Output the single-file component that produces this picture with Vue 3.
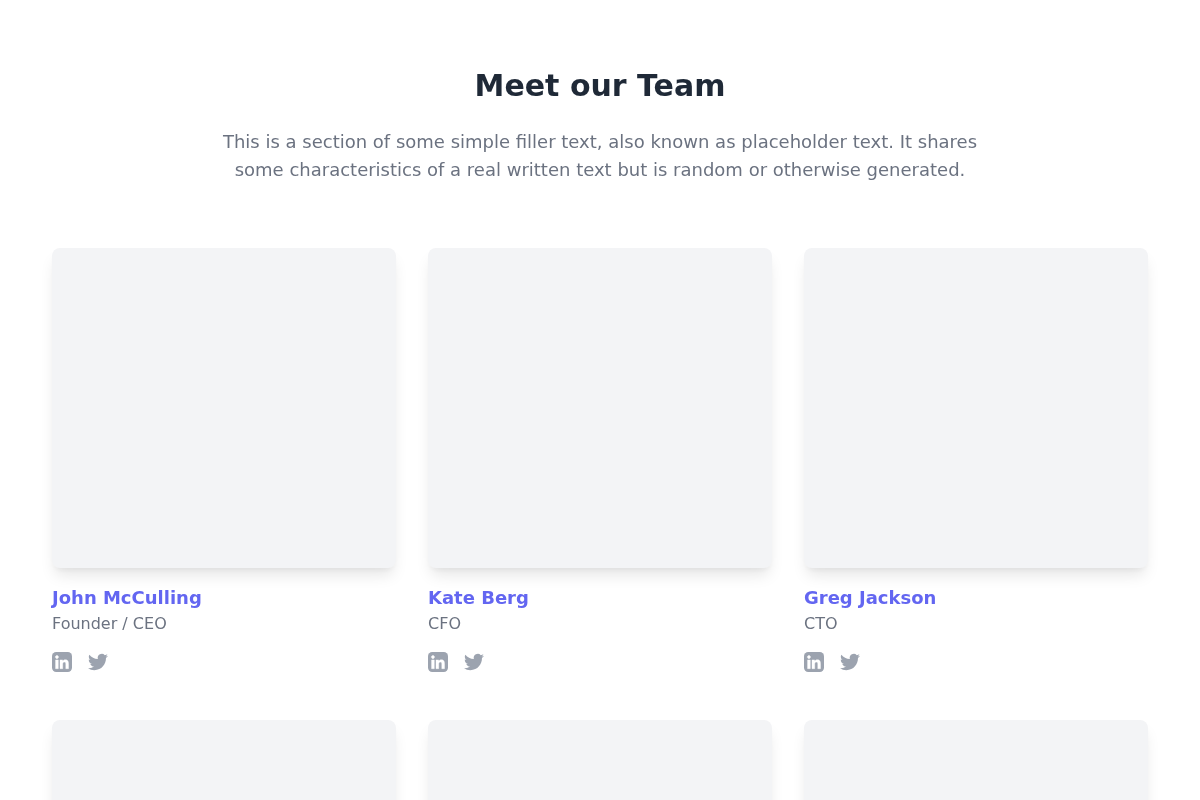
<template>
  <section class="team">
    <header class="intro">
      <h1>Meet our Team</h1>
      <p>This is a section of some simple filler text, also known as placeholder text. It shares some characteristics of a real written text but is random or otherwise generated.</p>
    </header>
    <div class="grid">
      <article v-for="(member, i) in members" :key="i" class="member">
        <div class="photo"></div>
        <template v-if="member.name">
          <h2>{{ member.name }}</h2>
          <div class="role">{{ member.role }}</div>
          <div class="links">
            <a href="#" aria-label="LinkedIn">
              <svg viewBox="0 0 24 24" width="20" height="20">
                <rect width="24" height="24" rx="5" fill="#9ca3af" />
                <path transform="translate(1 1.2) scale(.92 .92)" fill="#fff" stroke="#fff" stroke-width=".5" d="M20.447 20.452h-3.554v-5.569c0-1.328-.027-3.037-1.852-3.037-1.853 0-2.136 1.445-2.136 2.939v5.667H9.351V9h3.414v1.561h.046c.477-.9 1.637-1.85 3.37-1.85 3.601 0 4.267 2.37 4.267 5.455v6.286zM5.337 7.433c-1.144 0-2.063-.926-2.063-2.065 0-1.138.92-2.063 2.063-2.063 1.14 0 2.064.925 2.064 2.063 0 1.139-.925 2.065-2.064 2.065zm1.782 13.019H3.555V9h3.564v11.452z" />
              </svg>
            </a>
            <a href="#" aria-label="Twitter">
              <svg viewBox="0 0 24 24" width="20" height="20">
                <path fill="#9ca3af" d="M23.953 4.57a10 10 0 01-2.825.775 4.958 4.958 0 002.163-2.723c-.951.555-2.005.959-3.127 1.184a4.92 4.92 0 00-8.384 4.482C7.69 8.095 4.067 6.13 1.64 3.162a4.822 4.822 0 00-.666 2.475c0 1.71.87 3.213 2.188 4.096a4.904 4.904 0 01-2.228-.616v.06a4.923 4.923 0 003.946 4.827 4.996 4.996 0 01-2.212.085 4.936 4.936 0 004.604 3.417 9.867 9.867 0 01-6.102 2.105c-.39 0-.779-.023-1.17-.067a13.995 13.995 0 007.557 2.209c9.053 0 13.998-7.496 13.998-13.985 0-.21 0-.42-.015-.63A9.935 9.935 0 0024 4.59z" />
              </svg>
            </a>
          </div>
        </template>
      </article>
    </div>
  </section>
</template>

<script setup>
// second row only shows the photos in this view
const members = [
  { name: 'John McCulling', role: 'Founder / CEO' },
  { name: 'Kate Berg', role: 'CFO' },
  { name: 'Greg Jackson', role: 'CTO' },
  {},
  {},
  {}
]
</script>

<style scoped>
.team {
  padding: 68px 52px 48px;
  font-family: "DejaVu Sans", sans-serif;
  color: #6b7280;
  will-change: opacity;
}
.intro { text-align: center; margin-bottom: 64px; }
h1 {
  margin: 0 0 24px;
  font-size: 30px;
  line-height: 36px;
  font-weight: 700;
  color: #1f2937;
}
.intro p {
  margin: 0 auto;
  max-width: 768px;
  font-size: 18px;
  line-height: 28px;
}
.grid {
  display: grid;
  grid-template-columns: repeat(3, 344px);
  column-gap: 32px;
  row-gap: 48px;
}
.photo {
  height: 320px;
  background: #f3f4f6;
  border-radius: 8px;
  box-shadow: 0 10px 15px -3px rgba(0, 0, 0, 0.1), 0 4px 6px -2px rgba(0, 0, 0, 0.05);
}
h2 {
  margin: 16px 0 0;
  font-size: 18px;
  line-height: 28px;
  font-weight: 700;
  color: #6366f1;
}
.role { font-size: 16px; line-height: 24px; }
.links { display: flex; gap: 16px; margin-top: 16px; }
.links a { display: block; width: 20px; height: 20px; }
.links svg { display: block; }
</style>
